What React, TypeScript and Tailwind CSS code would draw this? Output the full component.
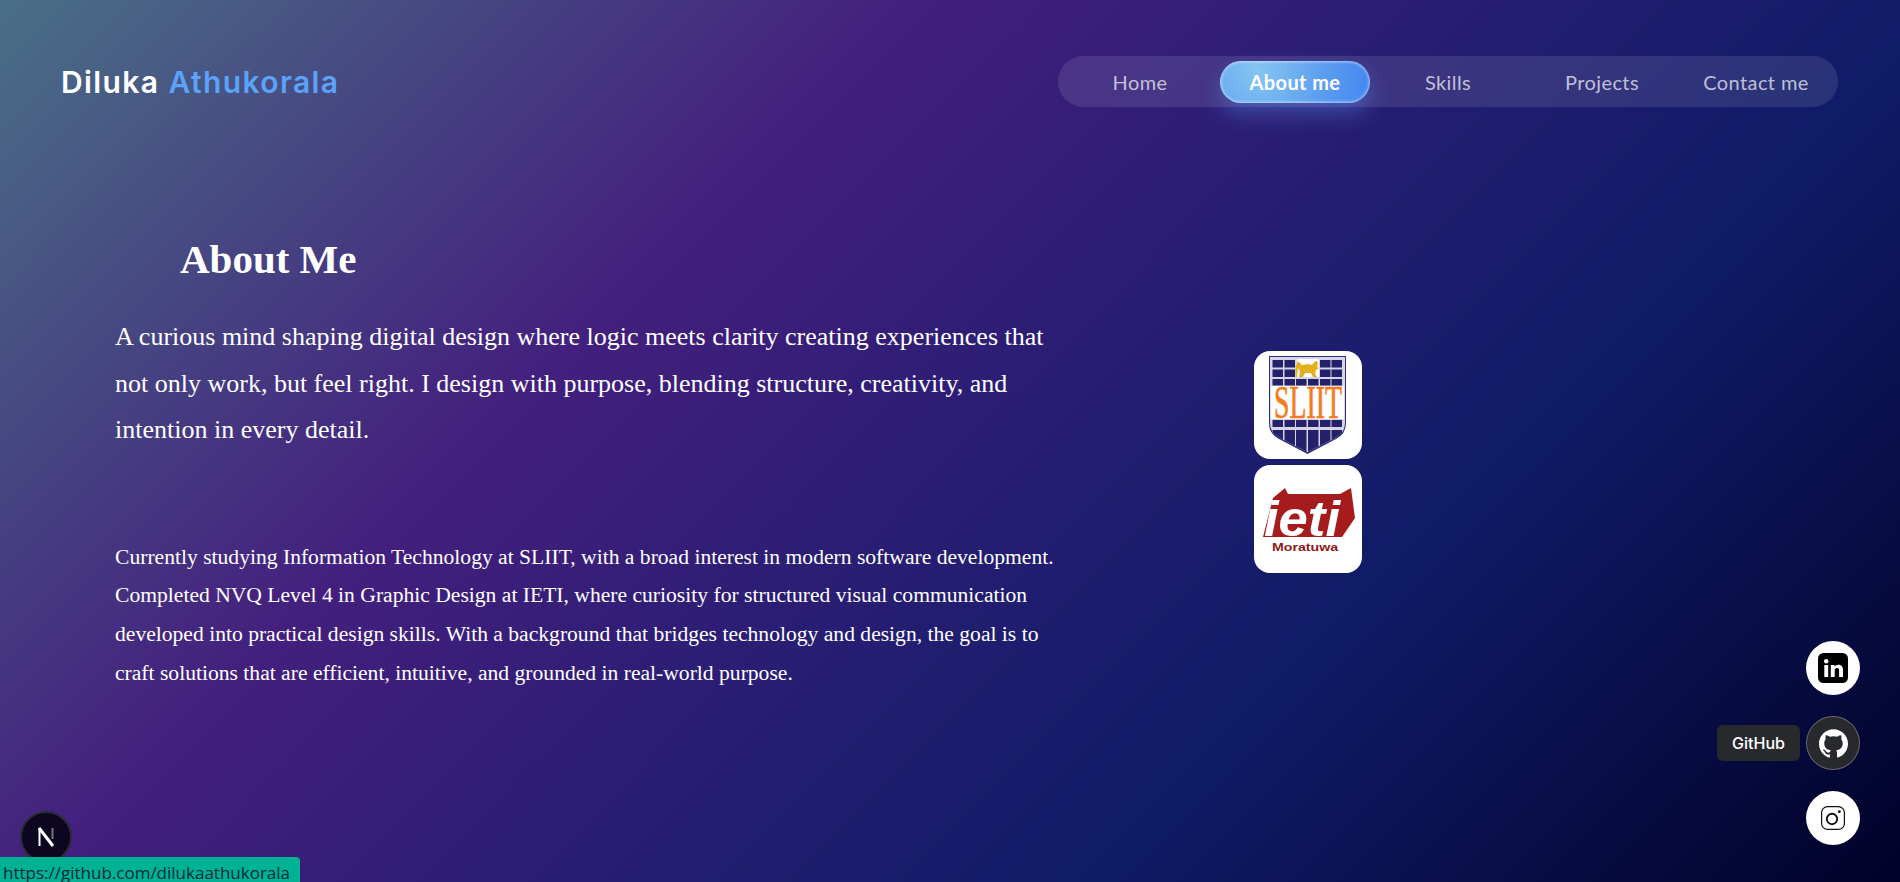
import { SiGithub } from "react-icons/si";

const navItems = ["Home", "About me", "Skills", "Projects", "Contact me"];

function SliitLogo() {
  const cols = [20, 32, 43.5, 55.5, 67.5, 79];
  return (
    <svg viewBox="0 0 108 108" className="w-[108px] h-[108px]">
      <defs>
        <clipPath id="shield">
          <path d="M16 6H91V72Q91 82 81 87L53.5 101L26 87Q16 82 16 72Z" />
        </clipPath>
      </defs>
      <path d="M15 5H92V72Q92 83 82 88L53.5 103L25 88Q15 83 15 72Z" fill="#2e2d7e" />
      <path d="M16 6H91V72Q91 82 81 87L53.5 101L26 87Q16 82 16 72Z" fill="#d5d5e6" />
      <g clipPath="url(#shield)" fill="#24216a">
        {cols.map((x) => (
          <g key={x}>
            {(x < 43 || x > 55.6) && <rect x={x - 1.5} y="9" width="10.5" height="7.5" />}
            {(x < 43 || x > 55.6) && <rect x={x - 1.5} y="18.5" width="10.5" height="7.5" />}
            <rect x={x - 1.5} y="28" width="10.5" height="6.5" />
            <rect x={x - 1.5} y="69" width="10.5" height="7" />
            <rect x={x - 1.5} y="79" width="10.5" height="24" />
          </g>
        ))}
      </g>
      <rect x="17" y="35" width="73" height="33" fill="#fff" />
      <rect x="43" y="8" width="22" height="18" fill="#fff" />
      <path d="M44 10l4 4 6-1 4 1 3-4 3 1-1 5 2 1-3 2-1 4 2 3h-4l-2-4-6 0-2 4h-4l1-6-2-3-1 9h-1.500l0-10z" fill="#e5b01e" />
      <text x="54" y="66.500" textAnchor="middle" fontFamily="'Liberation Serif', serif" fontSize="46" fill="#f47b20" stroke="#f47b20" strokeWidth="0.7" textLength="68" lengthAdjust="spacingAndGlyphs">SLIIT</text>
    </svg>
  );
}

function IetiLogo() {
  return (
    <svg viewBox="0 0 108 108" className="w-[108px] h-[108px]">
      <path d="M9 72L19 33L31 23L34 29H86L97 23L101 53L88 72Z" fill="#a61c1c" />
      <text x="10" y="71" fontFamily="'Liberation Sans', sans-serif" fontWeight="700" fontStyle="italic" fontSize="50" fill="#fff" textLength="76" lengthAdjust="spacingAndGlyphs">ieti</text>
      <text x="18" y="86" fontFamily="'Liberation Sans', sans-serif" fontWeight="700" fontSize="11.5" fill="#8e1a1a" textLength="66" lengthAdjust="spacingAndGlyphs">Moratuwa</text>
    </svg>
  );
}

function LinkedinIcon() {
  return (
    <svg viewBox="0 0 30 30" className="h-[30px] w-[30px]">
      <rect width="30" height="30" rx="5.5" fill="#000" />
      <circle cx="8.2" cy="8.3" r="2.2" fill="#fff" />
      <rect x="6.3" y="12" width="3.9" height="12" fill="#fff" />
      <path d="M12.8 12h3.7v1.700c.8-1.200 2.200-2 3.900-2 3.300 0 4.600 2.100 4.600 5.300V24h-3.900v-6.300c0-1.600-.5-2.600-1.900-2.600-1.500 0-2.500 1-2.500 2.800V24h-3.900z" fill="#fff" />
    </svg>
  );
}

function InstagramIcon() {
  return (
    <svg viewBox="0 0 24 24" className="h-6 w-6" fill="none" stroke="#111">
      <rect x="0.6" y="0.6" width="22.800" height="22.800" rx="6" strokeWidth="1.2" />
      <circle cx="11" cy="13" r="5.200" strokeWidth="1.900" />
      <circle cx="18.300" cy="5.700" r="1.400" fill="#111" stroke="none" />
    </svg>
  );
}

export default function App() {
  return (
    <div className="relative h-screen overflow-hidden bg-[linear-gradient(135deg,#4a6f86_0%,#431f7e_33%,#0f1c68_70%,#010128_100%)] font-['Liberation_Serif',serif] text-white">
      {/* Navbar */}
      <header className="flex items-center justify-between pl-[61px] pr-[62px] pt-[56px]">
        <div className="font-['Inter',sans-serif] text-[30px] font-semibold leading-none tracking-[1.4px]">
          Diluka <span className="text-[#5ba2fa]">Athukorala</span>
        </div>
        <nav className="flex h-[51px] w-[780px] items-center gap-1 rounded-full bg-white/10 px-[7px]">
          {navItems.map((item) =>
            item === "About me" ? (
              <a
                key={item}
                className="relative flex h-[42px] w-[150px] translate-x-[1px] items-center justify-center rounded-[21px] bg-[radial-gradient(circle_at_25%_25%,#86c6f2_0%,#5d9fef_55%,#4485f1_100%)] font-['Lato',sans-serif] text-[20px] font-bold tracking-[0.4px] text-white shadow-[inset_0_0_3px_1px_rgba(255,255,255,0.55),0_10px_22px_rgba(90,150,250,0.4)]"
              >
                {item}
              </a>
            ) : (
              <a key={item} className="flex h-[42px] w-[150px] items-center justify-center font-['Lato',sans-serif] text-[20px] tracking-[0.4px] text-white/70">
                {item}
              </a>
            ),
          )}
        </nav>
      </header>

      {/* About */}
      <main className="flex pl-[115px] pt-[128px]">
        <section className="w-[945px]">
          <h2 className="pl-[65px] text-[41px] font-bold leading-[48px]">About Me</h2>
          <p className="mt-[31px] text-[26px] leading-[46.5px]">
            A curious mind shaping digital design where logic meets clarity creating experiences that not only work, but feel right. I design with purpose, blending structure, creativity, and intention in every detail.
          </p>
          <p className="mt-[84px] text-[21.6px] leading-[38.8px]">
            Currently studying Information Technology at SLIIT, with a broad interest in modern software development. Completed NVQ Level 4 in Graphic Design at IETI, where curiosity for structured visual communication developed into practical design skills. With a background that bridges technology and design, the goal is to craft solutions that are efficient, intuitive, and grounded in real-world purpose.
          </p>
        </section>
        <div className="ml-[194px] mt-[116px] flex flex-col gap-[6px]">
          <div className="h-[108px] w-[108px] rounded-2xl bg-white">
            <SliitLogo />
          </div>
          <div className="h-[108px] w-[108px] rounded-2xl bg-white">
            <IetiLogo />
          </div>
        </div>
      </main>

      {/* Social buttons */}
      <div className="absolute right-[40px] top-[641px] flex flex-col gap-[21px]">
        <a className="flex h-[54px] w-[54px] items-center justify-center rounded-full bg-white">
          <LinkedinIcon />
        </a>
        <a className="relative flex h-[54px] w-[54px] items-center justify-center rounded-full border border-white/30 bg-[#28292d] text-white">
          <SiGithub className="h-[29px] w-[29px]" />
          <span className="absolute right-[59px] top-[8px] flex h-[36px] w-[83px] items-center justify-center rounded-md bg-[#28292d] font-['Inter',sans-serif] text-[16px] font-medium">
            GitHub
          </span>
        </a>
        <a className="flex h-[54px] w-[54px] items-center justify-center rounded-full bg-white">
          <InstagramIcon />
        </a>
      </div>

      {/* Next dev badge */}
      <div className="absolute left-[20px] top-[811px] flex h-[52px] w-[52px] items-center justify-center rounded-full border-2 border-[#2c2c33] bg-[#0d0620]">
        <svg viewBox="0 0 24 24" className="h-[24px] w-[24px]">
          <path d="M5.500 3v18" stroke="#fff" strokeWidth="2" />
          <path d="M5 3l14 18" stroke="#fff" strokeWidth="3" />
          <path d="M18.500 3v11" stroke="#777" strokeWidth="2" />
        </svg>
      </div>

      {/* Browser status bubble */}
      <div className="absolute bottom-0 left-0 h-[25px] w-[300px] overflow-hidden rounded-tr-[4px] bg-[#00b294] pl-[3px] font-['Open_Sans',sans-serif] text-[17px] leading-[31px] text-[#06283a]">
        https://github.com/dilukaathukorala
      </div>
    </div>
  );
}
